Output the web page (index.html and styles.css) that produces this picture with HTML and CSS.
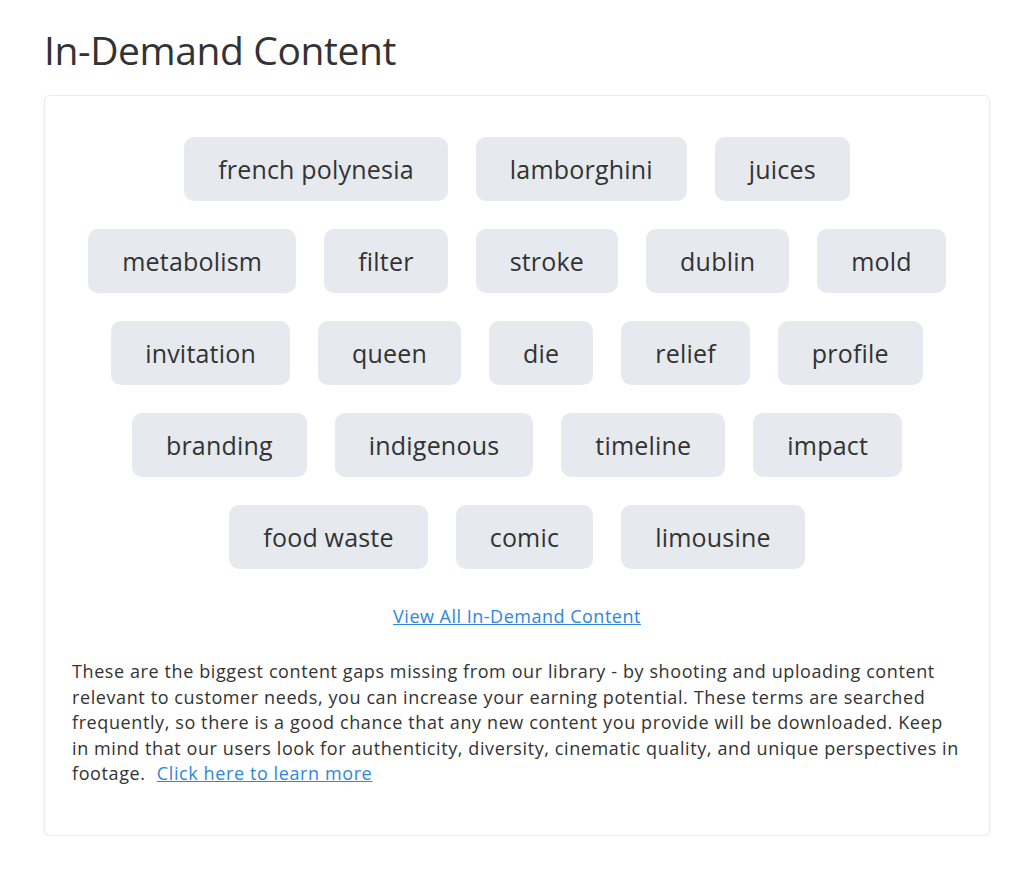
FILE: index.html
```html
<!DOCTYPE html>
<html lang="en">
<head>
  <meta charset="UTF-8">
  <title>In-Demand Content</title>
  <meta name="viewport" content="width=device-width, initial-scale=1.0">
  <link rel="stylesheet" href="styles.css">
</head>
<body>

  <div class="page">
    <h1>In-Demand Content</h1>

    <!-- Karte mit Suchbegriffen -->
    <div class="card">
      <div class="term-list">
        <a class="term" href="#">french polynesia</a>
        <a class="term" href="#">lamborghini</a>
        <a class="term" href="#">juices</a>
        <a class="term" href="#">metabolism</a>
        <a class="term" href="#">filter</a>
        <a class="term" href="#">stroke</a>
        <a class="term" href="#">dublin</a>
        <a class="term" href="#">mold</a>
        <a class="term" href="#">invitation</a>
        <a class="term" href="#">queen</a>
        <a class="term" href="#">die</a>
        <a class="term" href="#">relief</a>
        <a class="term" href="#">profile</a>
        <a class="term" href="#">branding</a>
        <a class="term" href="#">indigenous</a>
        <a class="term" href="#">timeline</a>
        <a class="term" href="#">impact</a>
        <a class="term" href="#">food waste</a>
        <a class="term" href="#">comic</a>
        <a class="term" href="#">limousine</a>
      </div>

      <div class="view-all">
        <a href="#">View All In-Demand Content</a>
      </div>

      <p class="info">
        These are the biggest content gaps missing from our library - by shooting and uploading content
        relevant to customer needs, you can increase your earning potential. These terms are searched
        frequently, so there is a good chance that any new content you provide will be downloaded. Keep
        in mind that our users look for authenticity, diversity, cinematic quality, and unique perspectives in
        footage. <a class="learn-more" href="#">Click here to learn more</a>
      </p>
    </div>
  </div>

</body>
</html>
```

FILE: styles.css
```css
/* Grundlayout */
body {
  margin: 0;
  padding: 0;
  background: #fff;
  font-family: "Open Sans", sans-serif;
  color: #333;
}
.page {
  width: 946px;
  margin-left: 44px;
  padding-top: 26px;
}
h1 {
  font-size: 39px;
  font-weight: 400;
  letter-spacing: -0.4px;
  margin: 0 0 22px;
  line-height: 47px;
  color: #333;
}

/* Karte */
.card {
  border: 1px solid #ebebeb;
  border-radius: 6px;
  box-shadow: 0 1px 2px rgba(0,0,0,0.08);
  padding: 41px 27px 48px;
}

/* Begriffe */
.term-list {
  display: flex;
  flex-wrap: wrap;
  justify-content: center;
  gap: 28px 28px;
}
.term {
  display: block;
  height: 64px;
  line-height: 64px;
  padding: 0 34px;
  border-radius: 10px;
  background: #e6e9ee;
  color: #333;
  font-size: 25px;
  letter-spacing: 0.2px;
  text-decoration: none;
}
.term:hover {
  background: #d8dce3;
}

/* Links */
.view-all {
  text-align: center;
  margin: 35px 0 31px;
  font-size: 18px;
  letter-spacing: 0.5px;
  line-height: 24px;
}
a {
  color: #2e86de;
}
.info {
  margin: 0;
  font-size: 18px;
  letter-spacing: 0.6px;
  line-height: 25.6px;
}
.learn-more {
  margin-left: 6px;
}
```
